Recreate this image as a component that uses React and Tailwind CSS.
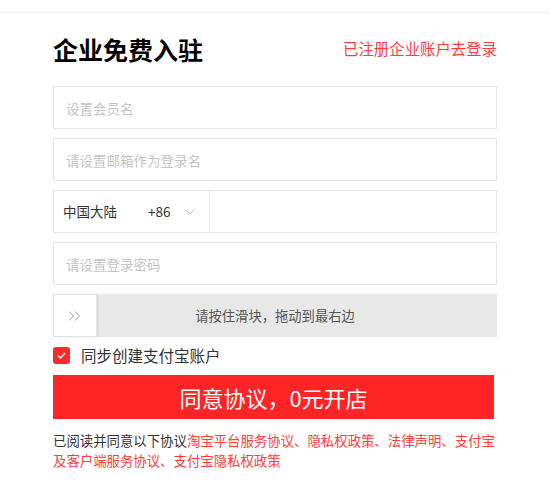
import { useState } from "react";

export default function App() {
  const [sync, setSync] = useState(true);

  return (
    <div
      className="w-[550px] h-[491px] bg-white overflow-hidden"
      style={{ fontFamily: '"Noto Sans CJK SC", "Noto Sans", sans-serif' }}
    >
      <div className="mt-[12px] border-t border-[#eeeeee]" />

      <div className="w-[444px] ml-[53px]">
        {/* HEADER */}
        <div className="flex items-center justify-between h-[72px]">
          <h1 className="text-[25px] font-bold text-black leading-none">
            企业免费入驻
          </h1>
          <a className="text-[15.4px] text-[#ff3b3b] leading-none cursor-pointer">
            已注册企业账户去登录
          </a>
        </div>

        {/* FORM */}
        <div className="flex flex-col gap-[9px] mt-[1px]">
          <Field placeholder="设置会员名" />
          <Field placeholder="请设置邮箱作为登录名" />

          <div className="flex h-[43px] border border-[#e5e5e5]">
            <div className="w-[156px] flex items-center pl-[9px] border-r border-[#e5e5e5] text-[13.5px] text-[#333]">
              <span>中国大陆</span>
              <span className="ml-[31px]">+86</span>
              <svg
                className="ml-[15px]"
                width="10"
                height="6"
                viewBox="0 0 10 6"
                fill="none"
                stroke="#bbb"
                strokeWidth="1"
              >
                <path d="M0.5 0.5 L5 5 L9.5 0.5" />
              </svg>
            </div>
            <input className="flex-1 outline-none px-3 text-[13.5px]" />
          </div>

          <Field placeholder="请设置登录密码" type="password" />

          {/* SLIDER */}
          <div className="relative h-[43px] bg-[#e8e8e8] flex items-center justify-center">
            <div className="absolute left-0 top-0 w-[44px] h-[43px] bg-white border border-[#e2e2e2] shadow-[1px_0_2px_rgba(0,0,0,0.08)] flex items-center justify-center">
              <svg
                width="14"
                height="10"
                viewBox="0 0 14 10"
                fill="none"
                stroke="#999"
                strokeWidth="1"
              >
                <path d="M1 0.5 L5.5 5 L1 9.5" />
                <path d="M7 0.5 L11.5 5 L7 9.5" />
              </svg>
            </div>
            <span className="text-[13.3px] text-[#555]">
              请按住滑块，拖动到最右边
            </span>
          </div>
        </div>

        {/* CHECKBOX */}
        <label className="flex items-center mt-[9px] h-[19px] cursor-pointer">
          <button
            onClick={() => setSync(!sync)}
            className={`w-[17px] h-[17px] rounded-[3px] flex items-center justify-center ${
              sync ? "bg-[#ff2a2a]" : "bg-white border border-[#ccc]"
            }`}
          >
            {sync && (
              <svg width="9" height="7" viewBox="0 0 9 7" fill="none" stroke="#fff" strokeWidth="1.4">
                <path d="M1 3.5 L3.5 6 L8 1" />
              </svg>
            )}
          </button>
          <span className="ml-[11px] text-[15.5px] text-[#333] leading-none">
            同步创建支付宝账户
          </span>
        </label>

        {/* SUBMIT */}
        <button className="mt-[10px] w-[441px] h-[44px] bg-[#ff2426] text-white text-[22px] flex items-center justify-center">
          同意协议，0元开店
        </button>

        {/* AGREEMENT */}
        <div className="mt-[11px] w-[442px] text-[13.4px] leading-[20px] text-[#ff3b3b]">
          <span className="text-[#333]">已阅读并同意以下协议</span>淘宝平台服务协议、隐私权政策、法律声明、支付宝及客户端服务协议、支付宝隐私权政策
        </div>
      </div>
    </div>
  );
}

function Field({ placeholder, type = "text" }) {
  return (
    <input
      type={type}
      placeholder={placeholder}
      className="h-[43px] w-full border border-[#e5e5e5] px-[12px] text-[13.5px] outline-none placeholder:text-[#c4c4c4]"
    />
  );
}
